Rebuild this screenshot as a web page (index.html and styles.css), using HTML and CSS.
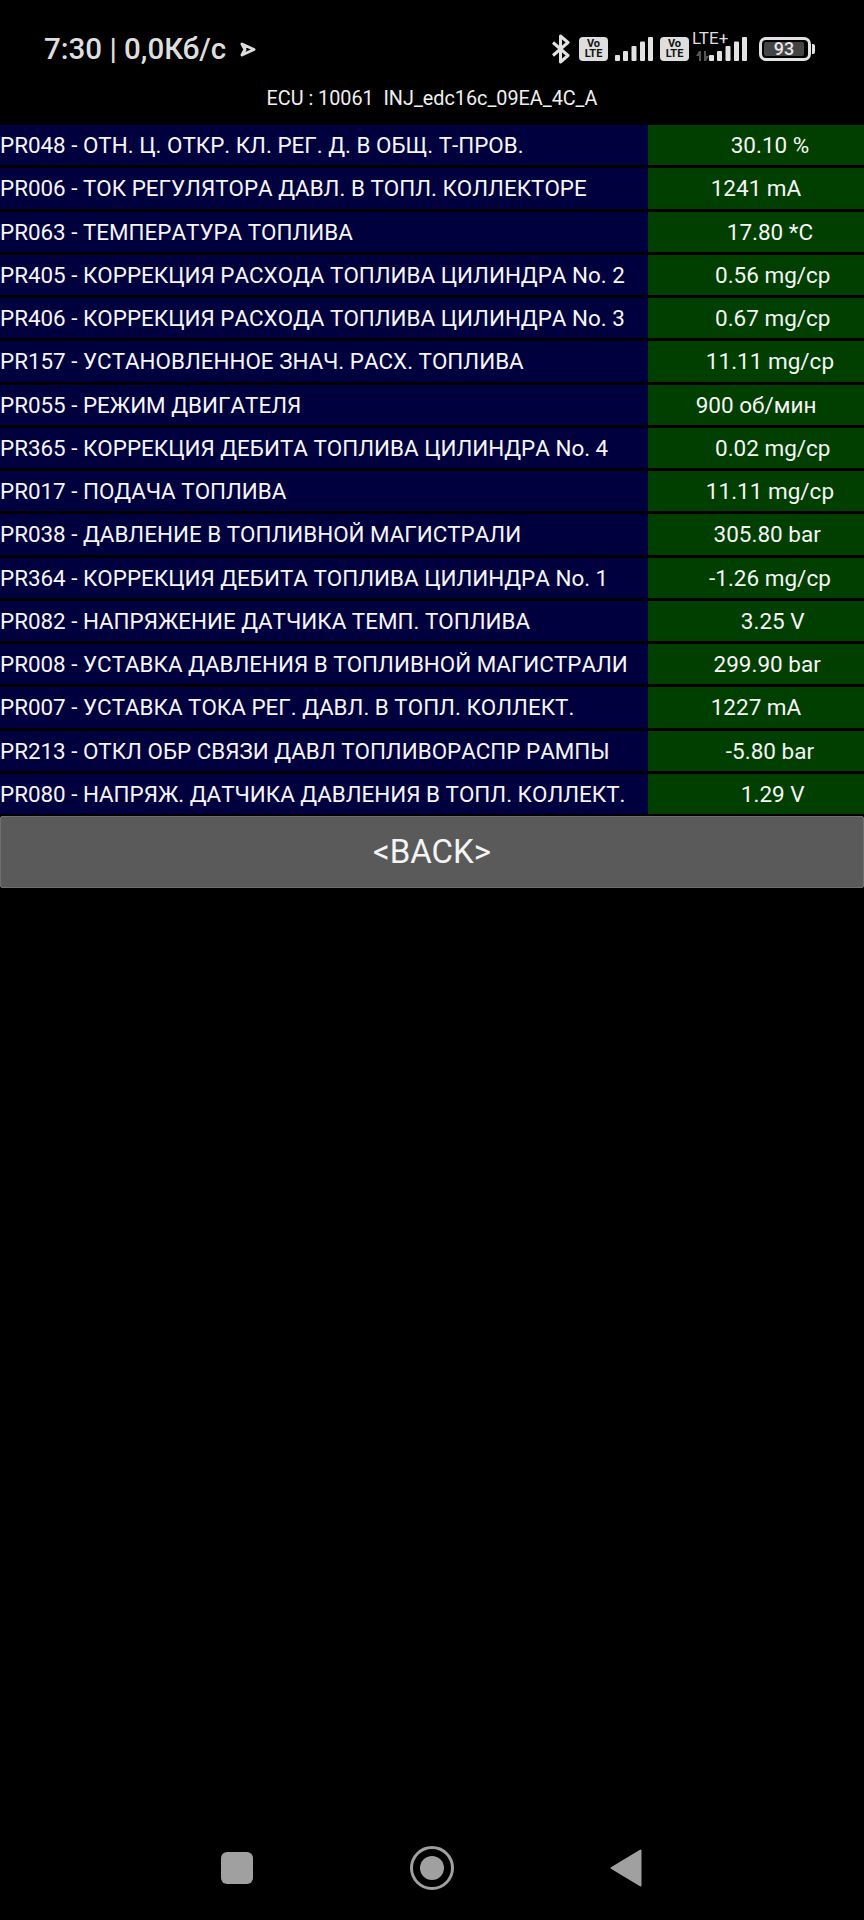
FILE: index.html
```html
<!DOCTYPE html>
<html lang="en">
<head>
    <meta charset="UTF-8">
    <title>ECU parameters</title>
    <link rel="stylesheet" href="styles.css">
</head>
<body>
    <div class="screen">
        <div class="status-bar">
            <div class="status-left">
                <span class="clock">7:30 | 0,0Кб/с</span>
                <svg class="cast-icon" width="16" height="15" viewBox="0 0 16 15">
                    <path d="M2 2 L14 7.5 L2 13 L5 7.5 Z" fill="none" stroke="#ddd" stroke-width="3" stroke-linejoin="round"/>
                </svg>
            </div>
            <div class="status-right">
                <svg class="bt-icon" width="20" height="30" viewBox="0 0 20 30">
                    <path d="M2 8.5 L17 21.5 L9.5 28 L9.5 2 L17 8.5 L2 21.5" fill="none" stroke="#e2e2e2" stroke-width="3" stroke-linejoin="round"/>
                </svg>
                <div class="volte">Vo<br>LTE</div>
                <svg class="signal" width="38" height="24" viewBox="0 0 38 24">
                    <rect x="0" y="18" width="5" height="6" rx="1"/>
                    <rect x="8" y="14" width="5" height="10" rx="1"/>
                    <rect x="16.5" y="9" width="5" height="15" rx="1"/>
                    <rect x="25" y="4.500" width="5" height="19.500" rx="1"/>
                    <rect x="33" y="0" width="5" height="24" rx="1"/>
                </svg>
                <div class="volte">Vo<br>LTE</div>
                <div class="lte-signal">
                    <span class="lte-label">LTE+</span>
                    <svg class="data-arrows" width="13" height="10" viewBox="0 0 13 10">
                        <path d="M0 5 L3 0 L5 0 L5 10 L3 10 L3 5 Z M13 5 L10 10 L8 10 L8 0 L10 0 L10 5 Z" fill="#555"/>
                    </svg>
                    <svg class="signal signal-small" width="38" height="24" viewBox="0 0 38 24">
                        <rect x="0" y="18" width="5" height="6" rx="1"/>
                        <rect x="8" y="14" width="5" height="10" rx="1"/>
                        <rect x="16.5" y="9" width="5" height="15" rx="1"/>
                        <rect x="25" y="4.500" width="5" height="19.500" rx="1"/>
                        <rect x="33" y="0" width="5" height="24" rx="1"/>
                    </svg>
                </div>
                <div class="battery">
                    <div class="battery-body"><span class="battery-fill">93</span></div>
                    <div class="battery-cap"></div>
                </div>
            </div>
        </div>

        <div class="ecu-title">ECU : 10061  INJ_edc16c_09EA_4C_A</div>

        <div class="params">
            <div class="row"><div class="name">PR048 - ОТН. Ц. ОТКР. КЛ. РЕГ. Д. В ОБЩ. Т-ПРОВ.</div><div class="value">     30.10 %</div></div>
            <div class="row"><div class="name">PR006 - ТОК РЕГУЛЯТОРА ДАВЛ. В ТОПЛ. КОЛЛЕКТОРЕ</div><div class="value">1241 mA</div></div>
            <div class="row"><div class="name">PR063 - ТЕМПЕРАТУРА ТОПЛИВА</div><div class="value">     17.80 *C</div></div>
            <div class="row"><div class="name">PR405 - КОРРЕКЦИЯ РАСХОДА ТОПЛИВА ЦИЛИНДРА No. 2</div><div class="value">      0.56 mg/cp</div></div>
            <div class="row"><div class="name">PR406 - КОРРЕКЦИЯ РАСХОДА ТОПЛИВА ЦИЛИНДРА No. 3</div><div class="value">      0.67 mg/cp</div></div>
            <div class="row"><div class="name">PR157 - УСТАНОВЛЕННОЕ ЗНАЧ. РАСХ. ТОПЛИВА</div><div class="value">     11.11 mg/cp</div></div>
            <div class="row"><div class="name">PR055 - РЕЖИМ ДВИГАТЕЛЯ</div><div class="value">900 об/мин</div></div>
            <div class="row"><div class="name">PR365 - КОРРЕКЦИЯ ДЕБИТА ТОПЛИВА ЦИЛИНДРА No. 4</div><div class="value">      0.02 mg/cp</div></div>
            <div class="row"><div class="name">PR017 - ПОДАЧА ТОПЛИВА</div><div class="value">     11.11 mg/cp</div></div>
            <div class="row"><div class="name">PR038 - ДАВЛЕНИЕ В ТОПЛИВНОЙ МАГИСТРАЛИ</div><div class="value">    305.80 bar</div></div>
            <div class="row"><div class="name">PR364 - КОРРЕКЦИЯ ДЕБИТА ТОПЛИВА ЦИЛИНДРА No. 1</div><div class="value">     -1.26 mg/cp</div></div>
            <div class="row"><div class="name">PR082 - НАПРЯЖЕНИЕ ДАТЧИКА ТЕМП. ТОПЛИВА</div><div class="value">      3.25 V</div></div>
            <div class="row"><div class="name">PR008 - УСТАВКА ДАВЛЕНИЯ В ТОПЛИВНОЙ МАГИСТРАЛИ</div><div class="value">    299.90 bar</div></div>
            <div class="row"><div class="name">PR007 - УСТАВКА ТОКА РЕГ. ДАВЛ. В ТОПЛ. КОЛЛЕКТ.</div><div class="value">1227 mA</div></div>
            <div class="row"><div class="name">PR213 - ОТКЛ ОБР СВЯЗИ ДАВЛ ТОПЛИВОРАСПР РАМПЫ</div><div class="value">     -5.80 bar</div></div>
            <div class="row"><div class="name">PR080 - НАПРЯЖ. ДАТЧИКА ДАВЛЕНИЯ В ТОПЛ. КОЛЛЕКТ.</div><div class="value">      1.29 V</div></div>
        </div>

        <div class="back-button">&lt;BACK&gt;</div>

        <div class="nav-bar">
            <svg width="32" height="32" viewBox="0 0 32 32">
                <rect x="0" y="0" width="32" height="32" rx="6" fill="#a0a0a0"/>
            </svg>
            <svg width="44" height="44" viewBox="0 0 44 44">
                <circle cx="22" cy="22" r="20.500" fill="none" stroke="#a0a0a0" stroke-width="3"/>
                <circle cx="22" cy="22" r="12" fill="#a0a0a0"/>
            </svg>
            <svg width="32" height="38" viewBox="0 0 32 38">
                <path d="M1.500 19 L30.500 1.500 L30.500 36.500 Z" fill="#a0a0a0" stroke="#a0a0a0" stroke-width="2" stroke-linejoin="round"/>
            </svg>
        </div>
    </div>
</body>
</html>
```

FILE: styles.css
```css
body {
    margin: 0;
    background-color: #000;
    font-family: Roboto, "Noto Sans", sans-serif;
    color: #fff;
}
.screen {
    display: flex;
    flex-direction: column;
    width: 864px;
    height: 1920px;
    overflow: hidden;
}
.status-bar {
    display: flex;
    align-items: center;
    justify-content: space-between;
    height: 38px;
    margin-top: 30px;
    padding: 0 49px 0 44px;
}
.status-left {
    display: flex;
    align-items: center;
    gap: 14px;
}
.clock {
    font-size: 29.5px;
    font-weight: 500;
    color: #dedede;
}
.status-right {
    display: flex;
    align-items: center;
}
.bt-icon {
    margin-right: 8px;
}
.volte {
    width: 29px;
    height: 24px;
    border-radius: 4px;
    background-color: #dedede;
    color: #111;
    font-size: 11px;
    font-weight: 700;
    line-height: 10px;
    text-align: center;
    padding-top: 2px;
    box-sizing: border-box;
}
.signal {
    display: block;
    margin: 0 7px;
    fill: #e2e2e2;
}
.lte-signal {
    position: relative;
    width: 58px;
    height: 24px;
}
.lte-label {
    position: absolute;
    top: -7px;
    left: 3px;
    font-size: 17px;
    line-height: 16px;
    color: #dedede;
}
.data-arrows {
    position: absolute;
    left: 7px;
    bottom: 0;
}
.signal-small {
    position: absolute;
    right: 0;
    top: 0;
    margin: 0;
}
.battery {
    display: flex;
    align-items: center;
    margin-left: 12px;
}
.battery-body {
    width: 52px;
    height: 24px;
    border: 3px solid #e2e2e2;
    border-radius: 7px;
    box-sizing: border-box;
    padding: 2px;
}
.battery-fill {
    display: block;
    width: 40px;
    height: 14px;
    border-radius: 2px;
    background-color: #444;
    color: #e8e8e8;
    font-size: 18px;
    font-weight: 500;
    line-height: 14px;
    text-align: center;
}
.battery-cap {
    width: 3px;
    height: 10px;
    margin-left: 1px;
    border-radius: 0 2px 2px 0;
    background-color: #e2e2e2;
}
.ecu-title {
    height: 57px;
    line-height: 62px;
    text-align: center;
    white-space: pre;
    font-size: 19.8px;
    color: #f0f0f0;
}
.params {
    display: flex;
    flex-direction: column;
    gap: 3px;
}
.row {
    display: flex;
    height: 40.25px;
    font-size: 22.5px;
    line-height: 41px;
    color: #f6f6f6;
}
.name {
    flex: 1;
    background-color: #00003f;
    white-space: nowrap;
    font-size: 22.4px;
    font-kerning: none;
}
.value {
    width: 216px;
    background-color: #003f00;
    text-align: center;
    white-space: pre;
}
.back-button {
    height: 72px;
    margin-top: 2px;
    border: 1px solid #6e6e6e;
    border-radius: 2px;
    box-sizing: border-box;
    background-color: #5a5a5a;
    font-size: 33px;
    line-height: 70px;
    text-align: center;
    color: #f4f4f4;
}
.nav-bar {
    display: flex;
    align-items: center;
    justify-content: space-between;
    height: 44px;
    margin-top: auto;
    margin-bottom: 30px;
    padding: 0 222px 0 221px;
}
```
